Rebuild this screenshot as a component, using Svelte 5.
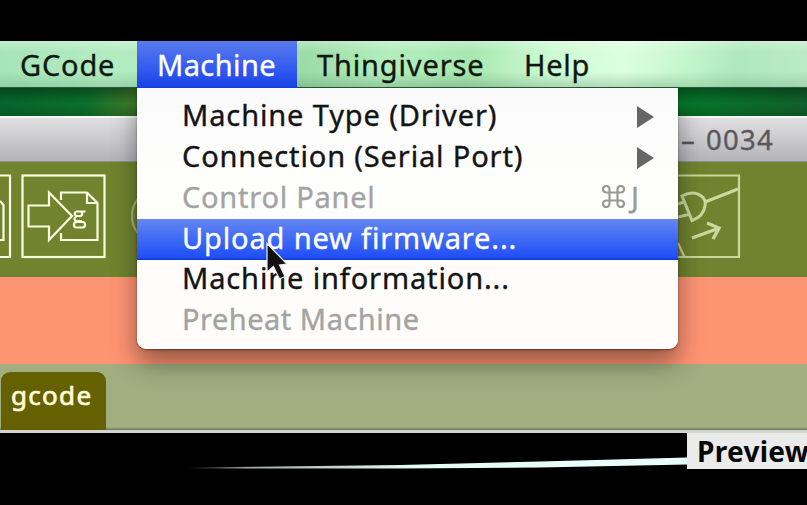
<script>
  const bar = [
    { text: 'GCode', width: 137, pad: 20, space: 0.8 },
    { text: 'Machine', width: 160, pad: 20, space: 0.4, active: true },
    { text: 'Thingiverse', width: 208, pad: 20, space: 0.85 },
    { text: 'Help', width: 302, pad: 19, space: 0.7 }
  ];
  const items = [
    { text: 'Machine Type (Driver)', space: 0.88, sub: true },
    { text: 'Connection (Serial Port)', space: 0.85, sub: true },
    { text: 'Control Panel', space: 0.75, disabled: true, key: true },
    { text: 'Upload new firmware...', space: 0.85, active: true },
    { text: 'Machine information...', space: 0.87 },
    { text: 'Preheat Machine', space: 0.5, disabled: true }
  ];
</script>

<div class="screen">
  <nav class="menubar">
    {#each bar as m}
      <div
        class="menu"
        class:active={m.active}
        style="width:{m.width}px;padding-left:{m.pad}px;letter-spacing:{m.space}px"
      >{m.text}</div>
    {/each}
  </nav>

  <div class="wallpaper"></div>
  <header class="titlebar"><span class="dash">–</span><span>0034</span></header>

  <div class="toolbar">
    <svg class="left" width="137" height="115" viewBox="0 162 137 115" fill="none" stroke="#fbfde0" stroke-width="2.200">
      <path d="M-60 175.500H10V257H-60M0 201L3.500 205V240H0" />
      <rect x="22.500" y="175.500" width="82" height="81.500" />
      <path d="M61 200V192.500H87L97.500 203V240H61V233" />
      <path d="M87 193V203H97" />
      <path d="M28.500 205.500H49V192.500L72 216L49 240V226.500H28.500Z" />
      <g stroke-width="2.200">
        <path d="M76 211.500H85.500M76 211.500Q73.500 214 76 216H81Q83.500 214 81 211.500M76 216.500Q73 219.500 76 221H82" />
        <rect x="74" y="222" width="11" height="5.500" rx="2.500" />
      </g>
      <circle cx="160" cy="216" r="28" stroke="#a7b777" />
    </svg>
    <svg class="right" width="129" height="115" viewBox="678 162 129 115" fill="none" stroke="#cbd89e" stroke-width="2.200">
      <path d="M600 175.500H739V257H600M678 243L684.500 257" />
      <path stroke-width="3" d="M682 196C695 189 707 196 705 206C704 213 699 218 692 220.500ZM705 202L738 189M678 204L685 201.500M678 217L689 214.500" />
      <path stroke-width="3.400" d="M692 238L718 228.500M707 223L719 228L713 239" />
    </svg>
  </div>

  <div class="status"></div>
  <div class="tabs"><div class="tab">gcode</div></div>
  <div class="editor">
    <svg width="687" height="36" viewBox="0 433 687 36">
      <defs>
        <linearGradient id="streak">
          <stop offset="0" stop-color="#000" />
          <stop offset=".12" stop-color="#a0a8a8" />
          <stop offset=".45" stop-color="#e4fbf7" />
          <stop offset="1" stop-color="#e9fffb" />
        </linearGradient>
      </defs>
      <path fill="url(#streak)" d="M188 467.600L400 465L540 461.500L687 457.500V464.500L540 467.500L400 468.500L188 468.600Z" />
    </svg>
    <div class="preview">Preview</div>
  </div>

  <div class="dropdown">
    {#each items as it}
      <div class="item" class:active={it.active} class:disabled={it.disabled}>
        <span style="letter-spacing:{it.space}px">{it.text}</span>
        {#if it.sub}
          <svg class="arrow" width="17" height="22" viewBox="0 0 17 22"><path d="M0 0L17 11L0 22Z" fill="#666" /></svg>
        {/if}
        {#if it.key}
          <div class="key">
            <svg width="23" height="23" viewBox="0 0 23 23" fill="none" stroke="#999" stroke-width="2.200">
              <path d="M7.500 7.500V4.500A3.300 3.300 0 1 0 4.500 7.500H18.500A3.300 3.300 0 1 0 15.500 4.500V18.500A3.300 3.300 0 1 0 18.500 15.500H4.500A3.300 3.300 0 1 0 7.500 18.500V7" />
            </svg>
            <span>J</span>
          </div>
        {/if}
      </div>
    {/each}
  </div>

  <svg class="cursor" width="26" height="42" viewBox="265 242 26 42">
    <path d="M267 243.500V272L273.500 266.500L279.500 279L285 276.500L279.500 265L287 264Z" fill="#111" stroke="#eee" stroke-width="1.200" />
  </svg>
</div>

<style>
  :global(body) { margin: 0; background: #000; }
  .screen {
    position: relative;
    box-sizing: border-box;
    width: 807px;
    height: 505px;
    padding-top: 41px;
    overflow: hidden;
    background: #000;
    color: #101810;
    font: 29px/1 "Noto Sans", "Open Sans", sans-serif;
    white-space: nowrap;
    -webkit-text-stroke: .35px currentColor;
  }
  .menubar {
    display: flex;
    box-sizing: border-box;
    height: 47px;
    border-bottom: 1px solid #245a36;
    background:
      linear-gradient(to bottom, rgba(255,255,255,.3), transparent 25%, transparent 65%, rgba(70,130,90,.22)),
      linear-gradient(100deg, #a5e5b8 0, #b4ecc2 15%, #9cdca9 38%, #b2eebc 48%, #a7e7b0 58%, #cdfbd2 68%, #dcffdf 77%, #c6f7cd 84%, #afe8bd 91%, #bcebc5 100%);
  }
  .menu { box-sizing: border-box; flex: none; height: 47px; line-height: 47px; }
  .menu.active { color: #fff; background: linear-gradient(#597bea, #3c62ef 45%, #1843ee); }
  .wallpaper {
    height: 28px;
    background: linear-gradient(rgba(0,20,5,.4), transparent 55%, rgba(0,30,5,.2)),
      linear-gradient(100deg, #07662b 0, #0c702c 11%, #3a7a2a 16%, #077a2b 80%, #08742c 88%, #12602b 100%);
  }
  .titlebar {
    display: flex;
    gap: 11px;
    box-sizing: border-box;
    height: 46px;
    padding-left: 681px;
    border-top: 2px solid #f7f7f7;
    border-bottom: 1px solid #929292;
    background: linear-gradient(#e0dfe1, #b4b3b7);
    color: #59595c;
    font-size: 27.500px;
    line-height: 43px;
    letter-spacing: 1.300px;
  }
  .dash { width: 14px; }
  .toolbar { display: flex; justify-content: space-between; height: 115px; background: #71832f; }
  .status { height: 87px; background: #ff9473; }
  .tabs {
    display: flex;
    align-items: flex-end;
    box-sizing: border-box;
    height: 69px;
    border-bottom: 3px solid #d5d5cf;
    background: linear-gradient(#a2ae80 0 63px, #858b6e 65px, #65695a 66px);
  }
  .tab {
    box-sizing: border-box;
    width: 105px;
    height: 58px;
    margin-left: 1px;
    padding-left: 10px;
    border-radius: 9px 9px 0 0;
    background: #656100;
    color: #fffbd9;
    font-size: 26px;
    line-height: 46px;
    letter-spacing: 1.300px;
    -webkit-text-stroke: .7px currentColor;
  }
  .editor { display: flex; height: 36px; }
  .preview {
    box-sizing: border-box;
    width: 120px;
    padding-left: 10px;
    overflow: hidden;
    background: #ebebeb;
    color: #080808;
    font-size: 28px;
    font-weight: 700;
    line-height: 36px;
    letter-spacing: .3px;
    -webkit-text-stroke: 0;
  }
  .dropdown {
    position: absolute;
    left: 137px;
    top: 88px;
    box-sizing: border-box;
    width: 541px;
    height: 261px;
    padding-top: 8.600px;
    border-radius: 0 0 9px 9px;
    background: linear-gradient(#fafafa, #fefffd 35%, #fffcfa);
    box-shadow: 0 14px 26px rgba(0,0,0,.42), 0 1px 2px rgba(0,0,0,.45);
  }
  .item {
    display: flex;
    align-items: center;
    justify-content: space-between;
    box-sizing: border-box;
    height: 40.800px;
    padding: 0 24px 0 45px;
    color: #141414;
    line-height: 40px;
  }
  .item > span, .key { position: relative; top: -1.700px; }
  .item.active { color: #fff; background: linear-gradient(#6585f1, #416cf5 45%, #214ff5 93%, #0a38d8); }
  .item.disabled { color: #a3a3a3; }
  .key { display: flex; align-items: center; width: 52px; gap: 6px; color: #999; }
  .cursor { position: absolute; left: 265px; top: 242px; }
</style>
